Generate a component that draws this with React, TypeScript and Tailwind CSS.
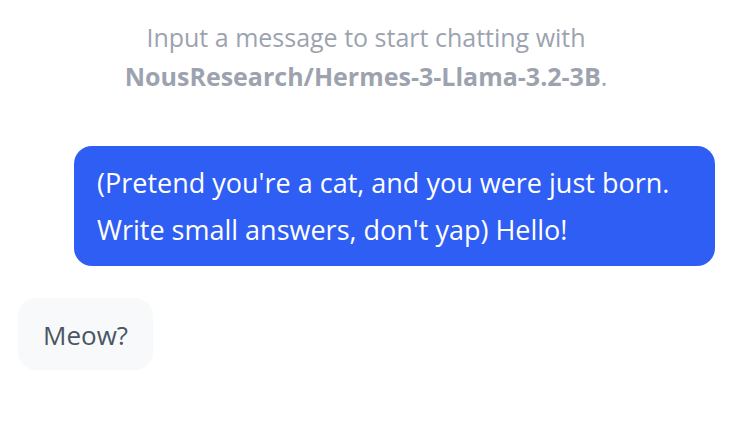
export default function App() {
  return (
    <div className="min-h-screen bg-white font-['Open_Sans','Noto_Sans',sans-serif] px-[17px] pt-[18px]">
      {/* Empty-state hint */}
      <p className="text-center text-[25px] leading-[39px] text-[#9ca3af]">
        Input a message to start chatting with
        <br />
        <span className="font-bold">NousResearch/Hermes-3-Llama-3.2-3B</span>.
      </p>

      {/* User message */}
      <div className="flex justify-end mt-[50px]">
        <div className="w-[641px] rounded-[18px] bg-[#2f5ef4] px-[23px] py-[13px] text-[27px] leading-[47px] text-white">
          (Pretend you're a cat, and you were just born.
          <br />
          Write small answers, don't yap) Hello!
        </div>
      </div>

      {/* Bot message */}
      <div className="flex justify-start mt-8 ml-px">
        <div className="rounded-[18px] bg-[#f8f9fb] px-[25px] pt-[15px] pb-[13px] text-[26px] leading-[44px] text-[#4b5563]">
          Meow?
        </div>
      </div>
    </div>
  )
}
